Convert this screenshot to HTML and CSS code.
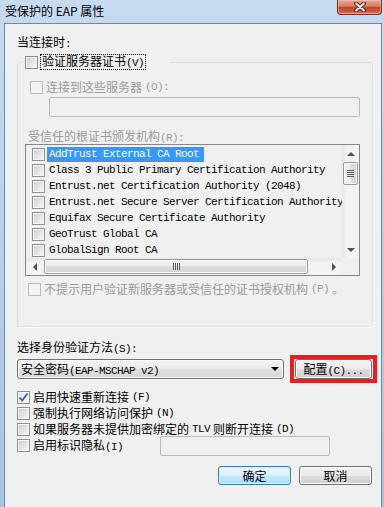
FILE: index.html
```html
<!DOCTYPE html>
<html lang="zh-CN">

<head>
    <meta charset="UTF-8">
    <meta name="viewport" content="width=device-width, initial-scale=1.0">
    <title>受保护的 EAP 属性</title>
    <link rel="stylesheet" href="styles.css">
</head>

<body>
    <div class="window">
        <div class="titlebar">
            <span class="title">受保护的 EAP 属性</span>
            <div class="close">
                <svg width="14" height="10" viewBox="0 0 14 10">
                    <path d="M3 1.5 L11 8.5 M11 1.5 L3 8.5" stroke="#5e1a10" stroke-width="4" stroke-linecap="round" />
                    <path d="M3 1.5 L11 8.5 M11 1.5 L3 8.5" stroke="#fff" stroke-width="2" stroke-linecap="round" />
                </svg>
            </div>
        </div>

        <div class="client">
            <div class="label">当连接时<span class="mono">:</span></div>

            <fieldset class="group">
                <legend>
                    <span class="legend-box">
                        <span class="check"></span>
                        <span class="focus">验证服务器证书<span class="mono">(V)</span></span>
                    </span>
                </legend>

                <div class="row disabled servers-row"><span class="check off"></span>连接到这些服务器<span class="mono">(O):</span></div>
                <div class="textbox servers"></div>

                <div class="label disabled ca-label">受信任的根证书颁发机构<span class="mono">(R):</span></div>

                <div class="listbox">
                    <div class="items">
                        <div class="item"><span class="check"></span><span class="name selected">AddTrust External CA Root</span></div>
                        <div class="item"><span class="check"></span><span class="name">Class 3 Public Primary Certification Authority</span></div>
                        <div class="item"><span class="check"></span><span class="name">Entrust.net Certification Authority (2048)</span></div>
                        <div class="item"><span class="check"></span><span class="name">Entrust.net Secure Server Certification Authority</span></div>
                        <div class="item"><span class="check"></span><span class="name">Equifax Secure Certificate Authority</span></div>
                        <div class="item"><span class="check"></span><span class="name">GeoTrust Global CA</span></div>
                        <div class="item"><span class="check"></span><span class="name">GlobalSign Root CA</span></div>
                    </div>
                    <div class="vscroll">
                        <div class="arrow-btn"><span class="tri up"></span></div>
                        <div class="vthumb"><span class="grip"></span></div>
                        <div class="space"></div>
                        <div class="arrow-btn"><span class="tri down"></span></div>
                    </div>
                    <div class="hscroll">
                        <div class="arrow-btn"><span class="tri left"></span></div>
                        <div class="hthumb"><span class="grip"></span></div>
                        <div class="space"></div>
                        <div class="arrow-btn"><span class="tri right"></span></div>
                    </div>
                    <div class="corner"></div>
                </div>

                <div class="row disabled prompt-row"><span class="check off"></span>不提示用户验证新服务器或受信任的证书授权机构<span class="mono">(P)</span>。</div>
            </fieldset>

            <div class="label method-label">选择身份验证方法<span class="mono">(S):</span></div>
            <div class="method-row">
                <div class="combo">
                    <span>安全密码<span class="mono">(EAP-MSCHAP v2)</span></span>
                    <span class="tri down dark"></span>
                </div>
                <div class="highlight">
                    <button class="btn config">配置<span class="mono">(C)...</span></button>
                </div>
            </div>

            <div class="options">
                <div class="row">
                    <span class="check on">
                        <svg width="11" height="11" viewBox="0 0 11 11">
                            <path d="M1.5 5.5 L4.2 8.5 L9.5 1.5" fill="none" stroke="#3d5aa8" stroke-width="1.8" />
                        </svg>
                    </span>启用快速重新连接<span class="mono">(F)</span>
                </div>
                <div class="row"><span class="check"></span>强制执行网络访问保护<span class="mono">(N)</span></div>
                <div class="row"><span class="check"></span>如果服务器未提供加密绑定的<span class="mono"> TLV </span>则断开连接<span class="mono">(D)</span></div>
                <div class="row privacy">
                    <span class="check"></span><span class="privacy-text">启用标识隐私<span class="mono">(I)</span></span>
                    <div class="textbox identity"></div>
                </div>
            </div>

            <div class="buttons">
                <button class="btn default">确定</button>
                <button class="btn">取消</button>
            </div>
        </div>
    </div>
</body>

</html>
```

FILE: styles.css
```css
* {
    box-sizing: border-box;
}

body {
    margin: 0;
    overflow: hidden;
    font-family: "Noto Sans CJK SC", "Noto Sans", sans-serif;
    font-size: 12px;
    color: #000;
}

.window {
    width: 384px;
    height: 507px;
    display: flex;
    flex-direction: column;
    background: linear-gradient(#c6daf0, #a6c5e7);
}

/* title bar */
.titlebar {
    height: 23px;
    flex: none;
    display: flex;
    align-items: center;
    padding: 0 2px 2px 5px;
}

.title {
    line-height: 16px;
}

.close {
    margin-left: auto;
    align-self: flex-start;
    width: 45px;
    height: 15px;
    border: 1px solid #7c2e22;
    border-top: 0;
    border-radius: 0 0 4px 4px;
    background: linear-gradient(#e7a593, #d5806a 45%, #c2432b 50%, #cc5538 80%, #de8466);
    box-shadow: inset 0 0 0 1px rgba(255, 210, 200, 0.45);
    display: flex;
    align-items: center;
    justify-content: center;
}

/* client area */
.client {
    flex: 1;
    margin: 0 2px 0 4px;
    background: #f0f0f0;
    border: 1px solid #71879f;
    border-bottom: 0;
    padding: 10px 0 0 12px;
}

.label {
    line-height: 16px;
    height: 16px;
    white-space: nowrap;
}

.disabled {
    color: #9a9a9a;
}

.mono {
    font-family: "Liberation Mono", monospace;
    font-size: 11px;
    line-height: 12px;
    letter-spacing: -0.6px;
}

/* checkboxes */
.check {
    width: 13px;
    height: 13px;
    flex: none;
    display: inline-flex;
    align-items: center;
    justify-content: center;
    border: 1px solid #8e8f8f;
    background: linear-gradient(135deg, #c9ccd1, #f3f3f3 85%);
    box-shadow: inset 0 0 0 1px #f6f6f6;
}

.check.off {
    border-color: #bcbcbc;
    background: #f4f4f4;
    box-shadow: none;
}

.check.on {
    background: linear-gradient(135deg, #dfe3ea, #f8f8f8 85%);
}

.row {
    display: flex;
    align-items: center;
    gap: 3px;
    height: 16px;
    line-height: 16px;
    white-space: nowrap;
}

/* group box */
.group {
    margin: 5px 0 0;
    width: 356px;
    min-width: 0;
    padding: 0 0 29px 5px;
    border: 1px solid #d5dfe5;
    border-radius: 3px;
    box-shadow: 1px 1px 0 #fff;
}

.group legend {
    padding: 0 24px 0 2px;
}

.legend-box {
    display: flex;
    align-items: center;
    gap: 2px;
    height: 14px;
}

.focus {
    border: 1px dotted #000;
    line-height: 12px;
    padding: 0 1px;
    white-space: nowrap;
}

.servers-row {
    margin: 10px 0 0 7px;
}

.textbox {
    border: 1px solid #b9b9b9;
    border-radius: 2px;
    background: #f0f0f0;
}

.servers {
    margin: 2px 0 0 26px;
    width: 311px;
    height: 20px;
}

.ca-label {
    margin: 11px 0 0 5px;
}

/* certificate list */
.listbox {
    margin-left: 2px;
    width: 335px;
    height: 132px;
    border: 1px solid #828790;
    display: grid;
    grid-template-columns: 1fr 17px;
    grid-template-rows: 1fr 17px;
}

.items {
    overflow: hidden;
    padding: 1px 0 0 6px;
}

.item {
    display: flex;
    align-items: center;
    height: 16px;
    white-space: nowrap;
}

.item .check {
    margin-right: 2px;
}

.name {
    font-family: "Liberation Mono", monospace;
    font-size: 11px;
    letter-spacing: -0.6px;
    line-height: 15px;
    padding: 0 5px 0 2px;
}

.name.selected {
    background: #3399ff;
    color: #fff;
}

.vscroll,
.hscroll,
.corner {
    background: #f0f0f0;
}

.vscroll {
    display: flex;
    flex-direction: column;
    background: linear-gradient(to right, #e6e6e6, #f3f3f3 30%, #f3f3f3);
}

.hscroll {
    display: flex;
    background: linear-gradient(#e6e6e6, #f3f3f3 30%, #f3f3f3);
}

.arrow-btn {
    flex: none;
    width: 17px;
    height: 17px;
    display: flex;
    align-items: center;
    justify-content: center;
}

.space {
    flex: 1;
}

.vthumb,
.hthumb {
    flex: none;
    border: 1px solid #999;
    border-radius: 2px;
    display: flex;
    align-items: center;
    justify-content: center;
    box-shadow: inset 0 0 0 1px #fafafa;
}

.vthumb {
    height: 23px;
    margin: 0 1px;
    background: linear-gradient(to right, #f4f4f4, #e9e9e9 50%, #dcdcdc 50%, #d2d2d2);
}

.vthumb .grip {
    width: 7px;
    height: 7px;
    background: repeating-linear-gradient(#5c5c5c 0 1px, transparent 1px 2px);
}

.hthumb {
    width: 264px;
    margin: 1px 0 1px 1px;
    background: linear-gradient(#f4f4f4, #e9e9e9 50%, #dcdcdc 50%, #d2d2d2);
}

.hthumb .grip {
    width: 7px;
    height: 7px;
    background: repeating-linear-gradient(to right, #5c5c5c 0 1px, transparent 1px 2px);
}

.tri {
    width: 0;
    height: 0;
}

.tri.up {
    border-left: 4px solid transparent;
    border-right: 4px solid transparent;
    border-bottom: 4px solid #505050;
}

.tri.down {
    border-left: 4px solid transparent;
    border-right: 4px solid transparent;
    border-top: 4px solid #505050;
}

.tri.left {
    border-top: 4px solid transparent;
    border-bottom: 4px solid transparent;
    border-right: 4px solid #505050;
}

.tri.right {
    border-top: 4px solid transparent;
    border-bottom: 4px solid transparent;
    border-left: 4px solid #505050;
}

.tri.dark {
    border-top-color: #000;
}

.prompt-row {
    margin: 5px 0 0 5px;
}

/* authentication method */
.method-label {
    margin-top: 12px;
}

.method-row {
    display: flex;
    align-items: center;
    gap: 6px;
    height: 28px;
}

.combo {
    width: 267px;
    height: 20px;
    border: 1px solid #707070;
    border-radius: 3px;
    background: linear-gradient(#f4f4f4, #ececec 50%, #e0e0e0 50%, #d6d6d6);
    box-shadow: inset 0 0 0 1px #fcfcfc;
    display: flex;
    align-items: center;
    justify-content: space-between;
    padding: 0 4px 0 3px;
    line-height: 16px;
    white-space: nowrap;
}

.highlight {
    width: 87px;
    height: 28px;
    border: 4px solid #ed1c24;
    padding: 0 1px;
    display: flex;
    align-items: center;
}

.btn {
    font: inherit;
    color: #000;
    width: 73px;
    height: 19px;
    padding: 0;
    line-height: 16px;
    border: 1px solid #707070;
    border-radius: 3px;
    background: linear-gradient(#f2f2f2, #ebebeb 50%, #dddddd 50%, #cfcfcf);
    box-shadow: inset 0 0 0 1px #fcfcfc;
}

.btn.config {
    width: 77px;
    height: 20px;
}

.btn.default {
    border-color: #3c7fb1;
    background: linear-gradient(#eaf6fd, #dcf1fc 50%, #c6e8fb 50%, #b4dff6);
    box-shadow: inset 0 0 0 1px #c8f0ff;
}

.options {
    margin-top: 6px;
}

.privacy-text {
    width: 124px;
}

.identity {
    width: 170px;
    height: 20px;
    margin: -1px 0 -3px;
}

.buttons {
    display: flex;
    justify-content: flex-end;
    gap: 8px;
    margin: 13px 9px 0 0;
}
```
